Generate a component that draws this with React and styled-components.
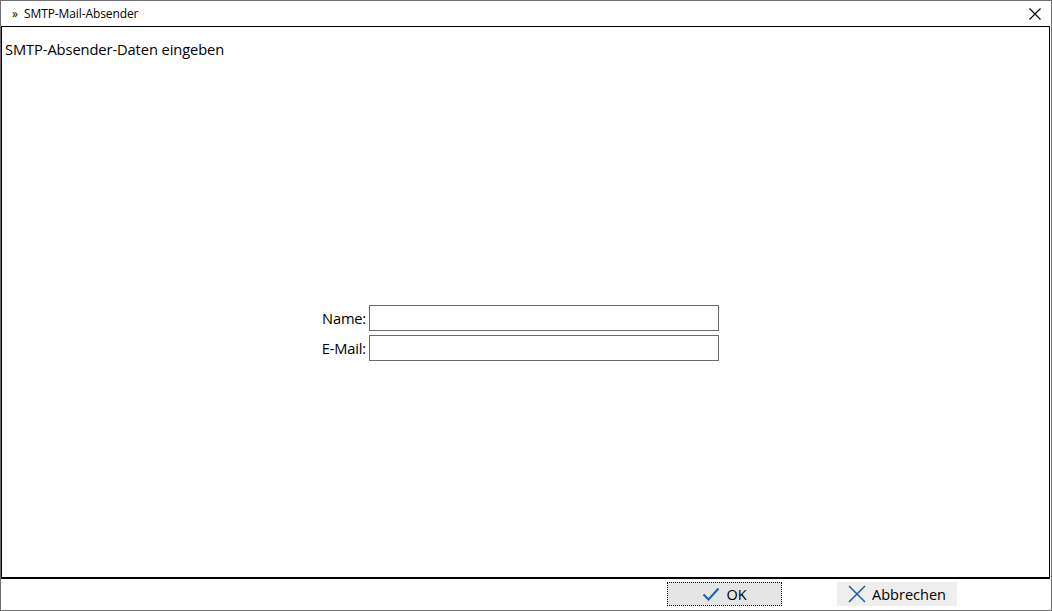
import React, { useState } from 'react';
import styled, { createGlobalStyle } from 'styled-components';

const GlobalStyle = createGlobalStyle`
  html, body {
    margin: 0;
    padding: 0;
    background: #fff;
  }
  body {
    font-family: "Open Sans", "Noto Sans", "Liberation Sans", sans-serif;
    color: #000;
  }
`;

const Window = styled.div`
  width: 1052px;
  height: 611px;
  box-sizing: border-box;
  border: 1px solid #6f6f6f;
  display: flex;
  flex-direction: column;
  background: #fff;
`;

const TitleBar = styled.div`
  height: 25px;
  flex-shrink: 0;
  display: flex;
  align-items: center;
  padding-left: 11px;
  padding-right: 9px;
  font-size: 12px;
  gap: 6px;
`;

const TitleText = styled.span`
  flex: 1;
  letter-spacing: -0.1px;
`;

const CloseButton = styled.button`
  width: 14px;
  height: 14px;
  padding: 0;
  border: 0;
  background: none;
  display: flex;
  align-items: center;
  justify-content: center;
`;

const Panel = styled.div`
  flex: 1;
  border: 1px solid #000;
  border-bottom-width: 2px;
  margin-right: 1px;
  display: flex;
  flex-direction: column;
`;

const Heading = styled.div`
  font-size: 14.7px;
  padding: 12px 0 0 3px;
  letter-spacing: -0.1px;
`;

const Form = styled.div`
  margin-top: 246px;
  display: grid;
  grid-template-columns: 364px 350px;
  column-gap: 3px;
  row-gap: 4px;
`;

const Label = styled.label`
  text-align: right;
  align-self: center;
  font-size: 14.7px;
  letter-spacing: -0.2px;
`;

const Input = styled.input`
  height: 26px;
  box-sizing: border-box;
  border: 1px solid #6a6a6a;
  padding: 0 4px;
  font: inherit;
  font-size: 14px;
  outline: none;
`;

const Footer = styled.div`
  height: 31px;
  flex-shrink: 0;
  display: flex;
  justify-content: flex-end;
  align-items: flex-start;
  padding-top: 3px;
  padding-right: 94px;
  gap: 55px;
  box-sizing: border-box;
`;

const Button = styled.button`
  height: 24px;
  width: ${p => p.$w}px;
  box-sizing: border-box;
  background: ${p => (p.$focused ? '#e5e5e5' : '#eeeeee')};
  border: 1px ${p => (p.$focused ? 'dotted #000' : 'solid #eeeeee')};
  display: flex;
  align-items: center;
  justify-content: center;
  gap: 6px;
  font-family: inherit;
  font-size: 14.5px;
  color: #000;
  padding: 0;
`;

function CheckIcon() {
  return (
    <svg width="18" height="14" viewBox="0 0 18 14">
      <path d="M1.5 7.5 L6.5 12.5 L16.5 1.5" fill="none" stroke="#1f5fa8" strokeWidth="2" />
    </svg>
  );
}

function CrossIcon({ size = 18, color = '#1f5fa8', width = 1.6 }) {
  return (
    <svg width={size} height={size} viewBox="0 0 18 18">
      <path d="M1 1 L17 17 M17 1 L1 17" fill="none" stroke={color} strokeWidth={width} />
    </svg>
  );
}

export default function App() {
  const [name, setName] = useState('');
  const [mail, setMail] = useState('');

  return (
    <>
      <GlobalStyle />
      <Window>
        <TitleBar>
          <span>»</span>
          <TitleText>SMTP-Mail-Absender</TitleText>
          <CloseButton>
            <svg width="12" height="12" viewBox="0 0 12 12">
              <path d="M0.5 0.5 L11.5 11.5 M11.5 0.5 L0.5 11.5" stroke="#000" strokeWidth="1.1" fill="none" />
            </svg>
          </CloseButton>
        </TitleBar>
        <Panel>
          <Heading>SMTP-Absender-Daten eingeben</Heading>
          <Form>
            <Label>Name:</Label>
            <Input value={name} onChange={e => setName(e.target.value)} />
            <Label>E-Mail:</Label>
            <Input value={mail} onChange={e => setMail(e.target.value)} />
          </Form>
        </Panel>
        <Footer>
          <Button $w={115} $focused>
            <CheckIcon />
            OK
          </Button>
          <Button $w={120}>
            <CrossIcon />
            Abbrechen
          </Button>
        </Footer>
      </Window>
    </>
  );
}
